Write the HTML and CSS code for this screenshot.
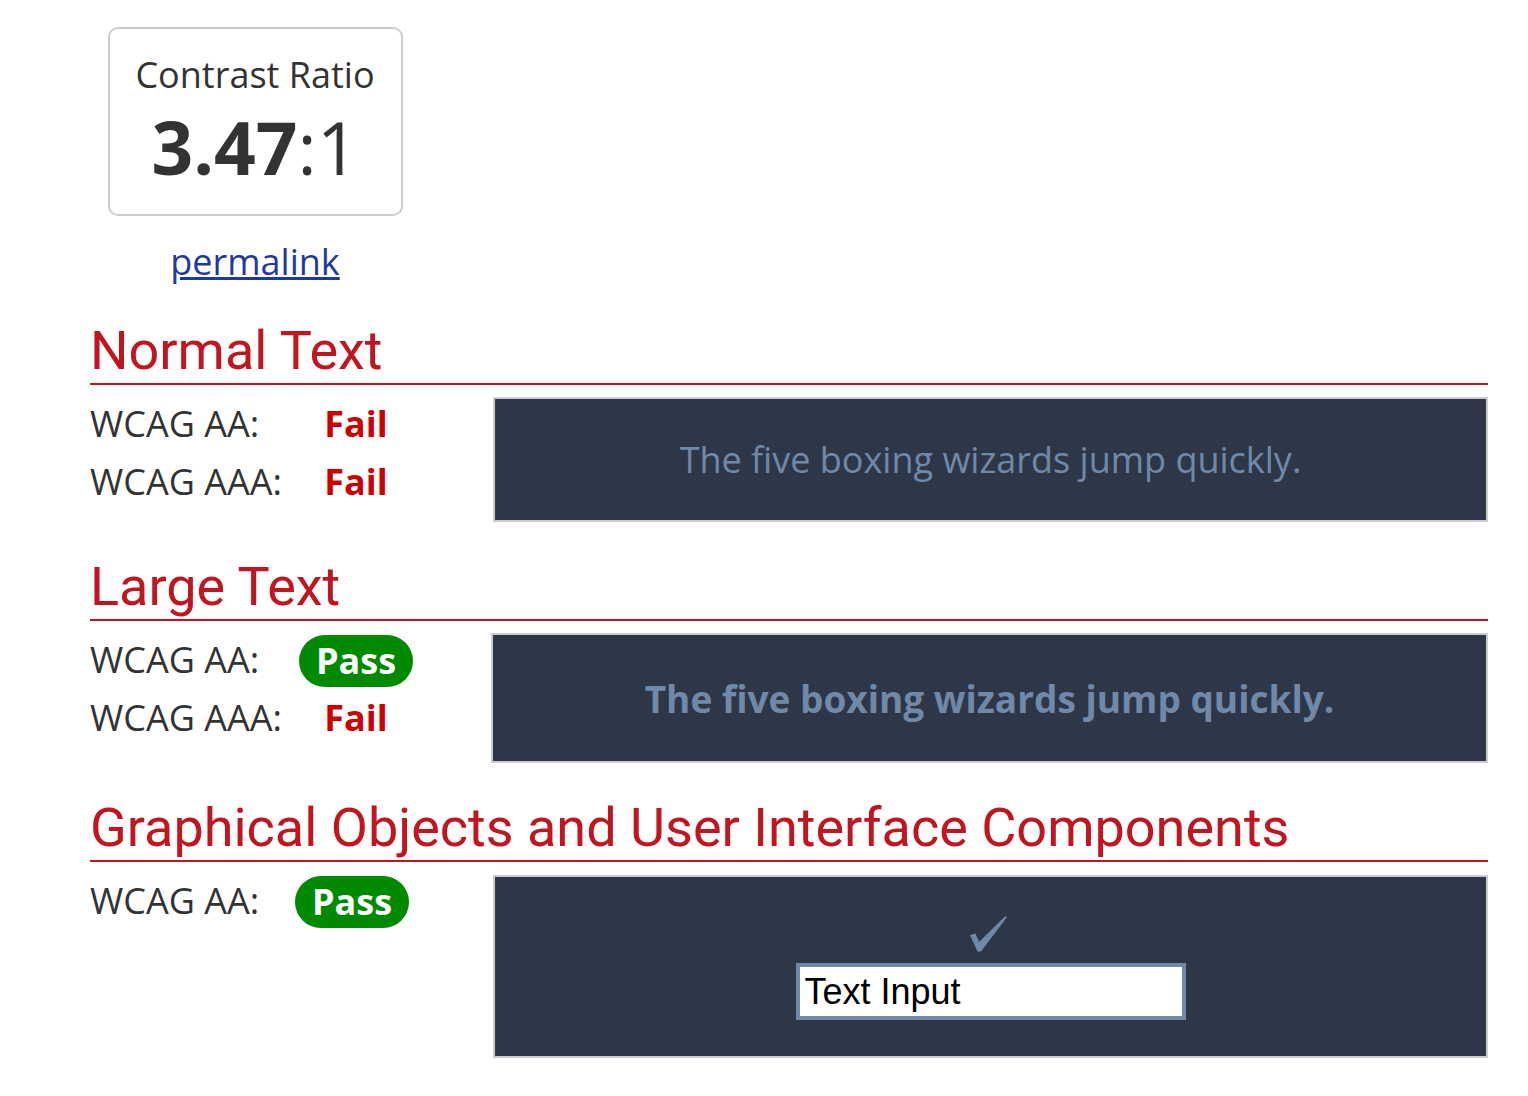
FILE: index.html
```html
<!DOCTYPE html>
<html lang="en">
<head>
  <meta charset="UTF-8">
  <meta name="viewport" content="width=device-width, initial-scale=1.0">
  <title>Contrast Checker</title>
  <link rel="stylesheet" href="styles.css">
</head>
<body>
  <div class="page">
    <div class="summary">
      <div class="ratio-box">
        <div class="ratio-label">Contrast Ratio</div>
        <div class="ratio-value"><b>3.47</b>:1</div>
      </div>
      <a class="permalink" href="#">permalink</a>
    </div>

    <section class="result">
      <h2>Normal Text</h2>
      <div class="result-body">
        <div class="checks">
          <span class="check-label">WCAG AA:</span>
          <span class="check-value"><span class="fail">Fail</span></span>
          <span class="check-label">WCAG AAA:</span>
          <span class="check-value"><span class="fail">Fail</span></span>
        </div>
        <div class="sample sample-normal">The five boxing wizards jump quickly.</div>
      </div>
    </section>

    <section class="result">
      <h2>Large Text</h2>
      <div class="result-body">
        <div class="checks">
          <span class="check-label">WCAG AA:</span>
          <span class="check-value"><span class="pass">Pass</span></span>
          <span class="check-label">WCAG AAA:</span>
          <span class="check-value"><span class="fail">Fail</span></span>
        </div>
        <div class="sample sample-large">The five boxing wizards jump quickly.</div>
      </div>
    </section>

    <section class="result">
      <h2>Graphical Objects and User Interface Components</h2>
      <div class="result-body">
        <div class="checks checks-single">
          <span class="check-label">WCAG AA:</span>
          <span class="check-value"><span class="pass">Pass</span></span>
        </div>
        <div class="sample sample-ui">
          <svg class="tick" width="40" height="40" viewBox="0 0 40 40" aria-hidden="true">
            <path d="M2 22 L7.5 20.5 L11 29 L37.5 3 L39 4 L13 38.5 L9.5 38.5 Z" fill="#7089a9"/>
          </svg>
          <input class="demo-input" type="text" value="Text Input">
        </div>
      </div>
    </section>
  </div>
</body>
</html>
```

FILE: styles.css
```css
body {
  margin: 0;
  font-family: 'Open Sans', 'DejaVu Sans', sans-serif;
  color: #333;
  background: #fff;
}
.page {
  padding: 27px 40px 0 90px;
}
.summary {
  width: 330px;
  display: flex;
  flex-direction: column;
  align-items: center;
}
.ratio-box {
  width: 295px;
  height: 189px;
  box-sizing: border-box;
  border: 2px solid #ccc;
  border-radius: 10px;
  text-align: center;
  padding-top: 22px;
}
.ratio-label {
  font-size: 36px;
  line-height: 48px;
}
.ratio-value {
  font-size: 73px;
  line-height: 96px;
}
.ratio-value b {
  font-weight: 700;
}
.permalink {
  margin-top: 22px;
  font-size: 36px;
  line-height: 48px;
  color: #1f3a9c;
}
.result h2 {
  margin: 33px 0 0;
  font-family: Roboto, 'Liberation Sans', sans-serif;
  font-weight: 400;
  font-size: 54px;
  line-height: 64px;
  color: #c1151f;
  border-bottom: 2px solid #c1151f;
}
.result-body {
  display: flex;
  margin-top: 12px;
}
.checks {
  width: 403px;
  flex: none;
  display: grid;
  grid-template-columns: 209px 114px;
  grid-auto-rows: 58px;
  align-content: start;
  align-items: center;
  font-size: 36px;
}
.checks-single {
  grid-template-columns: 205px 114px;
}
.check-label {
  padding-bottom: 5px;
}
.check-value {
  text-align: center;
}
.fail {
  display: inline-block;
  padding-bottom: 5px;
  color: #cc0000;
  font-weight: 700;
}
.pass {
  display: inline-block;
  background: #008a00;
  color: #fff;
  font-weight: 700;
  border-radius: 26px;
  padding: 0 17px;
  line-height: 52px;
  margin-bottom: 2px;
}
.sample {
  flex: 1;
  box-sizing: border-box;
  background: #2e3748;
  border: 2px solid #ccc;
  color: #7089a9;
  display: flex;
  align-items: center;
  justify-content: center;
  font-size: 36px;
}
.sample-normal {
  height: 125px;
}
.sample-large {
  height: 130px;
  margin-left: -2px;
  font-weight: 700;
  font-size: 37px;
}
.sample-ui {
  height: 183px;
  margin-top: 1px;
  flex-direction: column;
}
.tick {
  display: block;
  margin-left: -5px;
}
.demo-input {
  width: 390px;
  height: 57px;
  box-sizing: border-box;
  margin-top: 10px;
  border: 4px solid #7089a9;
  background: #fff;
  font-family: 'Liberation Sans', Arial, sans-serif;
  font-size: 36px;
  color: #000;
  padding: 0 5px;
}
```
